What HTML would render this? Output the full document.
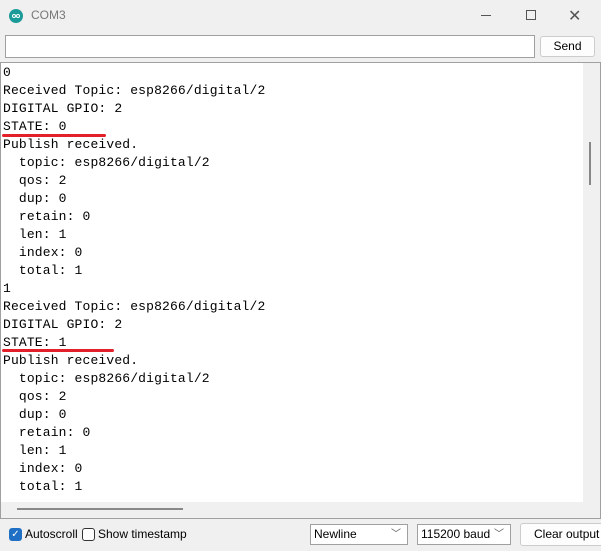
<!DOCTYPE html>
<html><head><style>
*{margin:0;padding:0;box-sizing:border-box}
body{width:601px;height:551px;background:#f0f0f0;position:relative;overflow:hidden;font-family:"Liberation Sans",sans-serif}
.abs{position:absolute}
pre{position:absolute;left:3px;top:64px;font-family:"Liberation Mono",monospace;font-size:13px;letter-spacing:0.15px;line-height:18px;color:#000}
.ul{position:absolute;height:3px;background:#e3202a;border-radius:2px}
.sel{position:absolute;height:21px;background:#fff;border:1px solid #a0a0a0;font-size:12px;line-height:19px;padding-left:3px}
.sel span{position:absolute;right:6px;top:0;color:#555;font-size:10px}
</style></head><body>
<div class="abs" style="left:0;top:0;width:601px;height:32px;background:#f0f0f0"></div>
<div class="abs" style="left:9px;top:9px;width:14px;height:14px;border-radius:50%;background:#1b9a9a"></div>
<div class="abs" style="left:12px;top:14px;width:4px;height:4px;border:1px solid #fff;border-radius:50%"></div>
<div class="abs" style="left:16px;top:14px;width:4px;height:4px;border:1px solid #fff;border-radius:50%"></div>
<div class="abs" style="left:31px;top:8px;font-size:12px;color:#777">COM3</div>
<div class="abs" style="left:481px;top:15px;width:10px;height:1px;background:#555"></div>
<div class="abs" style="left:526px;top:10px;width:10px;height:10px;border:1px solid #555"></div>
<div class="abs" style="left:568px;top:6px;font-size:16px;color:#555">✕</div>
<div class="abs" style="left:5px;top:35px;width:530px;height:23px;background:#fff;border:1px solid #a0a0a0"></div>
<div class="abs" style="left:540px;top:36px;width:55px;height:21px;background:#fdfdfd;border:1px solid #ccc;border-radius:3px;font-size:12px;text-align:center;line-height:19px">Send</div>
<div class="abs" style="left:0;top:62px;width:601px;height:457px;border:1px solid #a0a0a0;background:#f0f0f0"></div>
<div class="abs" style="left:1px;top:63px;width:582px;height:439px;background:#fff"></div>
<div class="abs" style="left:589px;top:142px;width:2px;height:43px;background:#888"></div>
<div class="abs" style="left:17px;top:508px;width:166px;height:2px;background:#888"></div>
<pre>0
Received Topic: esp8266/digital/2
DIGITAL GPIO: 2
STATE: 0
Publish received.
  topic: esp8266/digital/2
  qos: 2
  dup: 0
  retain: 0
  len: 1
  index: 0
  total: 1
1
Received Topic: esp8266/digital/2
DIGITAL GPIO: 2
STATE: 1
Publish received.
  topic: esp8266/digital/2
  qos: 2
  dup: 0
  retain: 0
  len: 1
  index: 0
  total: 1</pre>
<div class="ul" style="left:2px;top:134px;width:104px"></div>
<div class="ul" style="left:2px;top:349px;width:112px"></div>
<div class="abs" style="left:9px;top:528px;width:13px;height:13px;background:#1f6fc5;border-radius:3px;color:#fff;font-size:10px;line-height:13px;text-align:center">✓</div>
<div class="abs" style="left:25px;top:527px;font-size:12px">Autoscroll</div>
<div class="abs" style="left:82px;top:528px;width:13px;height:13px;border:1px solid #333;border-radius:3px;background:#fff"></div>
<div class="abs" style="left:98px;top:527px;font-size:12px">Show timestamp</div>
<div class="sel" style="left:310px;top:524px;width:98px">Newline<span>﹀</span></div>
<div class="sel" style="left:417px;top:524px;width:94px">115200 baud<span>﹀</span></div>
<div class="abs" style="left:520px;top:523px;width:85px;height:23px;background:#fdfdfd;border:1px solid #ccc;border-radius:3px;font-size:12px;line-height:21px;padding-left:13px;white-space:nowrap">Clear output</div>
</body></html>
